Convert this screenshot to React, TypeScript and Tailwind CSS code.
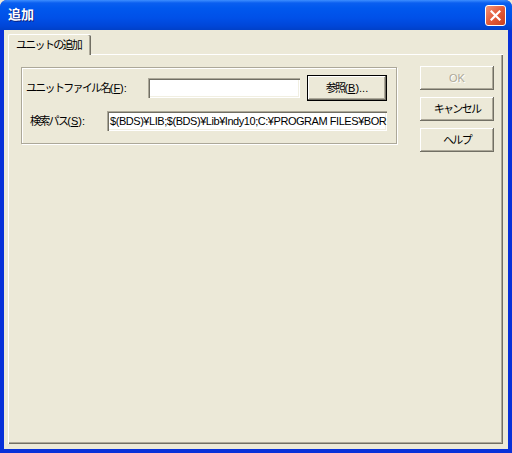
import React from "react";

const font = { fontFamily: '"Liberation Sans", "Noto Sans CJK JP", sans-serif' };

function J({ children }: { children: React.ReactNode }) {
  return <span className="tracking-[-1.7px]">{children}</span>;
}

function Btn({ children, disabled, def, h }: { children: React.ReactNode; disabled?: boolean; def?: boolean; h: string }) {
  return (
    <div
      className={
        "flex items-center justify-center bg-[#ECE9D8] text-[11px] leading-none whitespace-nowrap " +
        h +
        " " +
        (def
          ? "border border-black shadow-[inset_-1px_-1px_#716F64,inset_1px_1px_#fff,inset_-2px_-2px_#ACA899] "
          : "shadow-[inset_-1px_-1px_#716F64,inset_1px_1px_#fff,inset_-2px_-2px_#ACA899] ") +
        (disabled ? "text-[#ACA899] [text-shadow:1px_1px_#fff]" : "text-black")
      }
    >
      {children}
    </div>
  );
}

export default function App() {
  return (
    <div className="w-[512px] h-[453px] bg-[#ECE9D8] overflow-hidden" style={font}>
      <div className="w-full h-full flex flex-col rounded-t-[7px] bg-[#0831D9]">
        {/* title bar */}
        <div className="h-[30px] shrink-0 flex items-center justify-between pl-[8px] pr-[6px] rounded-t-[7px] bg-[linear-gradient(180deg,#3D8EFF_0px,#0A5FF0_3px,#0058EE_8px,#0050E8_18px,#0046D8_26px,#0040C8_30px)]">
          <span className="text-white font-bold text-[13px] [text-shadow:1px_1px_#0A1E80]">追加</span>
          <div className="w-[21px] h-[21px] mt-[1px] rounded-[3px] border border-white bg-[linear-gradient(135deg,#F0957A,#E35B3A_50%,#C8401F)] flex items-center justify-center">
            <svg width="11" height="11" viewBox="0 0 11 11">
              <path d="M1.5 1.5 L9.5 9.5 M9.5 1.5 L1.5 9.5" stroke="#fff" strokeWidth="2.2" strokeLinecap="square" />
            </svg>
          </div>
        </div>
        {/* body */}
        <div className="flex-1 mx-[4px] mb-[4px] bg-[#ECE9D8] flex flex-col pl-[4px] pr-[5px] pt-[4px] pb-[5px]">
          {/* tab strip */}
          <div className="h-[20px] flex shrink-0">
            <div className="w-[83px] h-[21px] relative z-10 bg-[#ECE9D8] border-t border-l border-white shadow-[inset_-1px_0_#716F64,inset_-2px_0_#ACA899] rounded-tl-[2px] rounded-tr-[2px] flex items-center pl-[7px] text-[11px] text-black whitespace-nowrap">
              <J>ユニットの追加</J>
            </div>
          </div>
          {/* panel */}
          <div className="flex-1 border-t border-l border-white shadow-[inset_-1px_-1px_#716F64,inset_-2px_-2px_#ACA899] flex pl-[12px] pt-[12px]">
            {/* group box */}
            <div className="w-[376px] h-[77px] shrink-0 border border-[#ACA899] shadow-[inset_1px_1px_#fff,1px_1px_#fff] text-[11px] text-black">
              <div className="flex items-center h-[20px] mt-[10px]">
                <span className="w-[126px] shrink-0 pl-[4px] whitespace-nowrap">
                  <J>ユニットファイル名</J>(<span className="underline">F</span>):
                </span>
                <div className="w-[152px] h-[20px] shrink-0 bg-white shadow-[inset_1px_1px_#ACA899,inset_2px_2px_#716F64,inset_-1px_-1px_#fff,inset_-2px_-2px_#F1EFE2]" />
                <div className="ml-[7px] w-[80px] h-[26px] shrink-0">
                  <Btn def h="h-[26px]">
                    <J>参照</J>(<span className="underline">B</span>)...
                  </Btn>
                </div>
              </div>
              <div className="flex items-center h-[20px] mt-[13px]">
                <span className="w-[85px] shrink-0 pl-[8px] whitespace-nowrap">
                  <J>検索パス</J>(<span className="underline">S</span>):
                </span>
                <div className="w-[280px] h-[20px] shrink-0 bg-white shadow-[inset_1px_1px_#ACA899,inset_2px_2px_#716F64,inset_-1px_-1px_#fff,inset_-2px_-2px_#F1EFE2] overflow-hidden whitespace-nowrap pl-[3px] flex items-center">
                  <span className="text-[11px] tracking-[-0.45px]">$(BDS)¥LIB;$(BDS)¥Lib¥Indy10;C:¥PROGRAM FILES¥BOR</span>
                </div>
              </div>
            </div>
            {/* buttons */}
            <div className="ml-[23px] -mt-[1px] flex flex-col gap-[7px]">
              <div className="w-[74px]"><Btn disabled h="h-[24px]">OK</Btn></div>
              <div className="w-[74px]"><Btn h="h-[24px]"><J>キャンセル</J></Btn></div>
              <div className="w-[74px]"><Btn h="h-[24px]"><J>ヘルプ</J></Btn></div>
            </div>
          </div>
        </div>
      </div>
    </div>
  );
}
